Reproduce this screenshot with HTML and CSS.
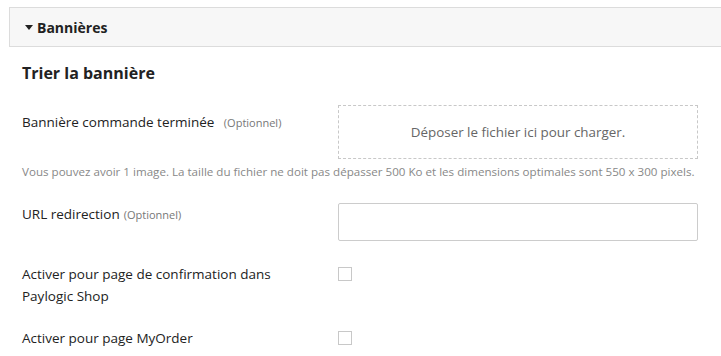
FILE: index.html
```html
<!DOCTYPE html>
<html lang="fr">
<head>
  <meta charset="UTF-8" />
  <meta name="viewport" content="width=device-width, initial-scale=1.0" />
  <title>Bannières</title>
  <link rel="stylesheet" href="styles.css">
</head>
<body>
  <div class="panel-heading">
    <span class="caret"></span>
    <span class="panel-title">Bannières</span>
  </div>

  <div class="panel-body">
    <h2>Trier la bannière</h2>

    <div class="form-row upload-row">
      <label>Bannière commande terminée <span class="optional">(Optionnel)</span></label>
      <div class="dropzone">Déposer le fichier ici pour charger.</div>
    </div>
    <p class="help">Vous pouvez avoir 1 image. La taille du fichier ne doit pas dépasser 500 Ko et les dimensions optimales sont 550 x 300 pixels.</p>

    <div class="form-row url-row">
      <label>URL redirection<span class="optional">(Optionnel)</span></label>
      <input type="text" class="text-input" />
    </div>

    <div class="form-row check-row">
      <label>Activer pour page de confirmation dans Paylogic Shop</label>
      <input type="checkbox" class="check" />
    </div>

    <div class="form-row check-row last">
      <label>Activer pour page MyOrder</label>
      <input type="checkbox" class="check" />
    </div>
  </div>
</body>
</html>
```

FILE: styles.css
```css
body {
  margin: 0;
  font-family: 'Open Sans', sans-serif;
  background-color: #ffffff;
  color: #222;
  overflow: hidden;
}
.panel-heading {
  margin: 7px 0 0 9px;
  height: 38px;
  background-color: #f7f7f7;
  border: 1px solid #dcdcdc;
  border-right: none;
  display: flex;
  align-items: center;
  padding-left: 15px;
}
.caret {
  width: 0;
  height: 0;
  border-left: 4px solid transparent;
  border-right: 4px solid transparent;
  border-top: 5px solid #222;
  margin-right: 4px;
  margin-top: 1px;
}
.panel-title {
  font-weight: 700;
  font-size: 14px;
}
.panel-body {
  padding: 0 23px 0 22px;
}
h2 {
  font-size: 16px;
  font-weight: 700;
  margin: 16px 0 22px;
  line-height: 20px;
}
.form-row {
  display: grid;
  grid-template-columns: 316px 360px;
  align-items: start;
}
.form-row label {
  font-size: 13.5px;
  line-height: 22px;
  color: #222;
}
.optional {
  font-size: 11px;
  color: #777;
  margin-left: 6px;
}
.url-row .optional {
  margin-left: 4px;
}
.upload-row label {
  padding-top: 6px;
}
.dropzone {
  height: 52px;
  border: 1px dashed #c8c8c8;
  display: flex;
  align-items: center;
  justify-content: center;
  font-size: 13.4px;
  color: #666;
}
.help {
  font-size: 11.6px;
  color: #888;
  margin: 5px 0 0;
  line-height: 16px;
  white-space: nowrap;
}
.url-row {
  margin-top: 23px;
}
.text-input {
  box-sizing: border-box;
  height: 38px;
  width: 360px;
  margin: 0;
  border: 1px solid #cccccc;
  border-radius: 2px;
}
.check-row {
  margin-top: 22px;
}
.check-row label {
  width: 280px;
}
.check-row.last {
  margin-top: 20px;
}
.check {
  appearance: none;
  width: 14px;
  height: 14px;
  margin: 4px 0 0;
  border: 1px solid #c8c8c8;
  background: #fff;
}
```
